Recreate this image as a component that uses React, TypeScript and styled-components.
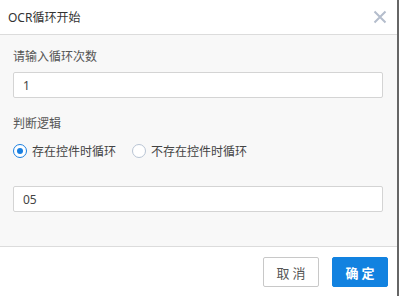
import React, { useState } from "react";
import styled, { createGlobalStyle } from "styled-components";

const GlobalStyle = createGlobalStyle`
  html, body {
    margin: 0;
    padding: 0;
    background: #fff;
  }
  body {
    font-family: "Noto Sans", "Noto Sans CJK SC", sans-serif;
  }
`;

const Dialog = styled.div`
  width: 397px;
  height: 296px;
  display: flex;
  flex-direction: column;
  background: #fff;
  border-right: 2px solid #666;
`;

//header
const Header = styled.div`
  height: 34px;
  display: flex;
  align-items: center;
  justify-content: space-between;
  padding: 0 10px 0 8px;
  border-bottom: 1px solid #dcdcdc;
`;
const Title = styled.span`
  font-size: 12px;
  color: #333;
`;
const CloseBtn = styled.button`
  border: none;
  background: none;
  padding: 0;
  width: 14px;
  height: 14px;
  display: flex;
  cursor: pointer;
`;

//body
const Body = styled.div`
  flex: 1;
  background: #f8f8f8;
  padding: 12px 14px 0 13px;
  border-bottom: 1px solid #dcdcdc;
`;
const Label = styled.div<{ $top?: number }>`
  font-size: 12px;
  line-height: 20px;
  color: #555;
  margin-top: ${(p) => p.$top ?? 0}px;
`;
const Input = styled.input<{ $top?: number }>`
  display: block;
  box-sizing: border-box;
  width: 100%;
  height: 26px;
  margin-top: ${(p) => p.$top ?? 0}px;
  padding: 0 9px;
  border: 1px solid #d4d4d4;
  border-radius: 2px;
  background: #fff;
  font-family: "Noto Sans", sans-serif;
  font-size: 12px;
  color: #444;
  outline: none;
`;
const RadioRow = styled.div`
  display: flex;
  align-items: center;
  gap: 16px;
  height: 20px;
  margin-top: 7px;
`;
const RadioItem = styled.label`
  display: flex;
  align-items: center;
  gap: 5px;
  font-size: 12px;
  color: #444;
  cursor: pointer;
`;
const RadioDot = styled.span<{ $on: boolean }>`
  box-sizing: border-box;
  width: 14px;
  height: 14px;
  border-radius: 50%;
  border: 1px solid ${(p) => (p.$on ? "#1a7fe0" : "#b8c4d4")};
  background: #fff;
  display: flex;
  align-items: center;
  justify-content: center;
  &::after {
    content: "";
    width: 6px;
    height: 6px;
    border-radius: 50%;
    background: #1a7fe0;
    display: ${(p) => (p.$on ? "block" : "none")};
  }
`;

//footer
const Footer = styled.div`
  height: 49px;
  display: flex;
  justify-content: flex-end;
  align-items: flex-start;
  gap: 13px;
  padding: 10px 9px 0 0;
  box-sizing: border-box;
`;
const Button = styled.button<{ $primary?: boolean }>`
  width: 56px;
  height: 30px;
  border-radius: 2px;
  font-family: "Noto Sans CJK SC", sans-serif;
  font-size: 13px;
  font-weight: ${(p) => (p.$primary ? 700 : 400)};
  letter-spacing: 3px;
  padding: 0 0 0 3px;
  border: 1px solid ${(p) => (p.$primary ? "#1282e0" : "#c8c8c8")};
  background: ${(p) => (p.$primary ? "#1282e0" : "#fff")};
  color: ${(p) => (p.$primary ? "#fff" : "#555")};
  cursor: pointer;
`;

export default function App() {
  const [mode, setMode] = useState(0);
  return (
    <>
      <GlobalStyle />
      <Dialog>
        <Header>
          <Title>OCR循环开始</Title>
          <CloseBtn>
            <svg width="14" height="14" viewBox="0 0 14 14">
              <path d="M1.5 1.5L12.5 12.5M12.5 1.5L1.5 12.5" stroke="#b4bdcc" strokeWidth="2" />
            </svg>
          </CloseBtn>
        </Header>
        <Body>
          <Label>请输入循环次数</Label>
          <Input $top={5} defaultValue="1" />
          <Label $top={16}>判断逻辑</Label>
          <RadioRow>
            <RadioItem onClick={() => setMode(0)}>
              <RadioDot $on={mode === 0} />
              存在控件时循环
            </RadioItem>
            <RadioItem onClick={() => setMode(1)}>
              <RadioDot $on={mode === 1} />
              不存在控件时循环
            </RadioItem>
          </RadioRow>
          <Input $top={25} defaultValue="05" />
        </Body>
        <Footer>
          <Button>取消</Button>
          <Button $primary>确定</Button>
        </Footer>
      </Dialog>
    </>
  );
}
